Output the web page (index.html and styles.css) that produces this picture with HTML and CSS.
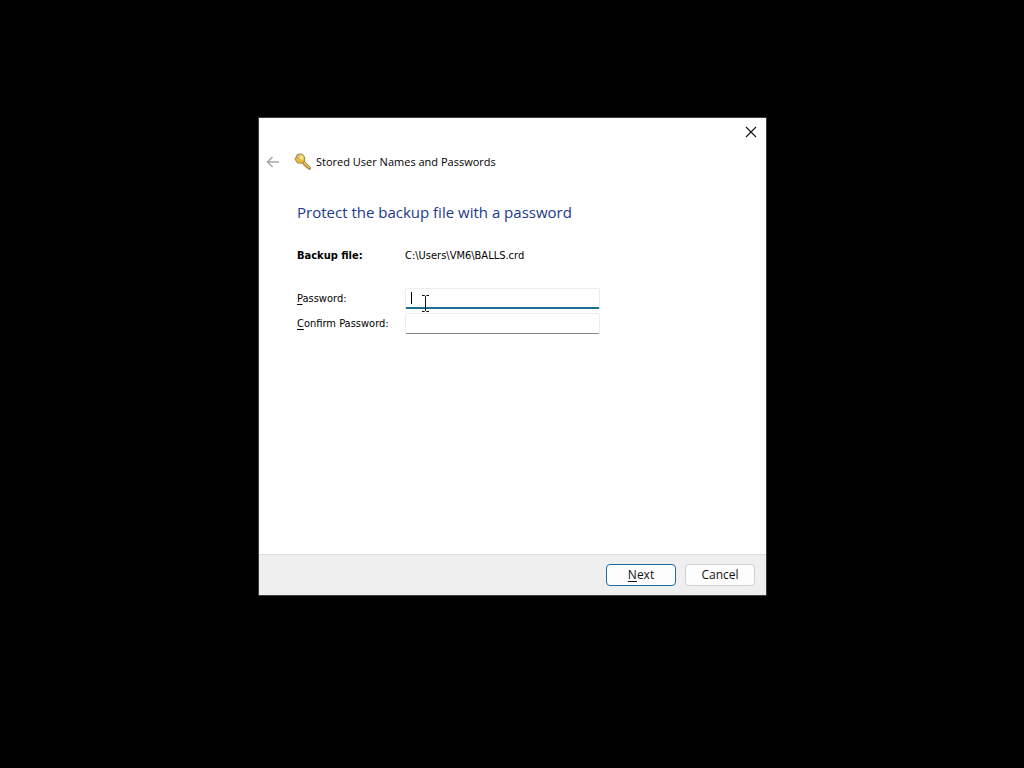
FILE: index.html
```
<!DOCTYPE html>
<html lang="en">
<head>
<meta charset="utf-8">
<meta name="viewport" content="width=device-width, initial-scale=1">
<title>Stored User Names and Passwords</title>
<link rel="stylesheet" href="styles.css">
</head>
<body>
<form class="wizard">
  <div class="caption">
    <button class="close" type="button" aria-label="Close">
      <svg width="12" height="12" viewBox="0 0 12 12" fill="none" stroke="#111" stroke-width="1.1"><path d="M1 1l10 10M11 1L1 11"/></svg>
    </button>
  </div>
  <header class="header">
    <button class="back" type="button" aria-label="Back" disabled>
      <svg width="14" height="12" viewBox="0 0 14 12" fill="none" stroke="#a8a8a8" stroke-width="1.6"><path d="M13 6H1.500M6.500 1l-5 5 5 5"/></svg>
    </button>
    <svg class="key" width="18" height="18" viewBox="0 0 18 18">
      <path d="M8.2 9.300l1.600-1.600 6.600 6.600v1.900l-1.700.1-1-1.300-1.300-.2-.5-1.400-1.400-.4z" fill="#d5a52f" stroke="#87683a" stroke-width=".8"/>
      <path d="M9.600 8.800l6 6.200" stroke="#f7dc85" stroke-width=".9"/>
      <path d="M3.400 1.400L7.600.9l3.100 3-.2 4.300-3 2.200-4.200-.6L1 6.300z" fill="#e7bd42" stroke="#98783d" stroke-width=".9" stroke-linejoin="round"/>
      <path d="M3.800 2.700l3.400-.5 2.100 2-.2 2.800L4.300 5z" fill="#fae697"/>
      <circle cx="4" cy="3.900" r="1.200" fill="#fff" stroke="#98783d" stroke-width=".7"/>
    </svg>
    <span class="title">Stored User Names and Passwords</span>
  </header>
  <main class="page">
    <h1 class="heading">Protect the backup file with a password</h1>
    <div class="row file">
      <strong>Backup file:</strong>
      <span>C:\Users\VM6\BALLS.crd</span>
    </div>
    <div class="row">
      <label for="password"><u>P</u>assword:</label>
      <div class="field">
        <input class="input active" id="password" type="password">
        <span class="caret"></span>
        <svg class="pointer" width="9" height="17" viewBox="0 0 9 17" fill="none" stroke="#111" stroke-width="1"><path d="M1 .5h2.500l1 1 1-1H8M4.500 1.500v14M1 16.500h2.500l1-1 1 1H8"/></svg>
      </div>
    </div>
    <div class="row">
      <label for="confirm"><u>C</u>onfirm Password:</label>
      <div class="field"><input class="input" id="confirm" type="password"></div>
    </div>
  </main>
  <footer class="footer">
    <button class="button primary" type="submit"><span><u>N</u>ext</span></button>
    <button class="button" type="button">Cancel</button>
  </footer>
</form>
</body>
</html>
```
FILE: styles.css
```
* { box-sizing: border-box; }

body {
  margin: 0;
  min-height: 100vh;
  padding: 0 0 55px 1px;
  display: grid;
  place-items: center;
  background: #000;
  color: #111;
  font: 12px/16px "Open Sans", "Noto Sans", sans-serif;
}

.wizard {
  width: 100%;
  max-width: 509px;
  min-height: 479px;
  display: flex;
  flex-direction: column;
  background: #fff;
  border: 1px solid #3c3c3c;
}

.caption {
  display: flex;
  justify-content: flex-end;
  padding: 0 4px;
}

.close,
.back {
  display: grid;
  place-items: center;
  padding: 0;
  border: 0;
  background: none;
}

.close { width: 22px; height: 27px; }
.back { width: 14px; height: 18px; }

.header {
  display: flex;
  align-items: center;
  padding: 8px 7px;
}

.key { margin-left: 14px; }

.title {
  margin-left: 4px;
  color: #000;
  font-size: 11px;
  line-height: 18px;
}

.page {
  flex: 1;
  padding: 21px 38px;
  font-family: "DejaVu Sans Condensed", "Open Sans", sans-serif;
  font-size: 11px;
}

.heading {
  margin: 0 0 24px;
  color: #22398a;
  font-family: "Open Sans", "Noto Sans", sans-serif;
  font-size: 15px;
  font-weight: 400;
  line-height: 24px;
}

.row {
  display: grid;
  grid-template-columns: 108px minmax(0, 195px);
  align-items: center;
  margin-bottom: 4px;
  color: #000;
}

.file { height: 16px; margin-bottom: 24px; }

.field { position: relative; }

.input {
  display: block;
  width: 100%;
  height: 21px;
  padding: 0 6px;
  border: 1px solid #ececec;
  border-bottom-color: #868686;
  border-radius: 2px;
  outline: 0;
  background: #fff;
  font: inherit;
}

.active { border-bottom: 2px solid #1d6c93; }

.caret {
  position: absolute;
  left: 6px;
  top: 4px;
  width: 1px;
  height: 12px;
  background: #000;
}

.pointer {
  position: absolute;
  left: 16px;
  top: 7px;
}

.footer {
  display: flex;
  justify-content: flex-end;
  gap: 9px;
  padding: 9px 11px;
  background: #efefef;
  border-top: 1px solid #dcdcdc;
}

.button {
  width: 70px;
  height: 22px;
  padding: 0;
  border: 1px solid #d0d0d0;
  border-radius: 4px;
  background: #fdfdfd;
  color: #111;
  font: inherit;
}

.primary { border-color: #1d6c9f; }

u { text-underline-offset: 2px; }
```
